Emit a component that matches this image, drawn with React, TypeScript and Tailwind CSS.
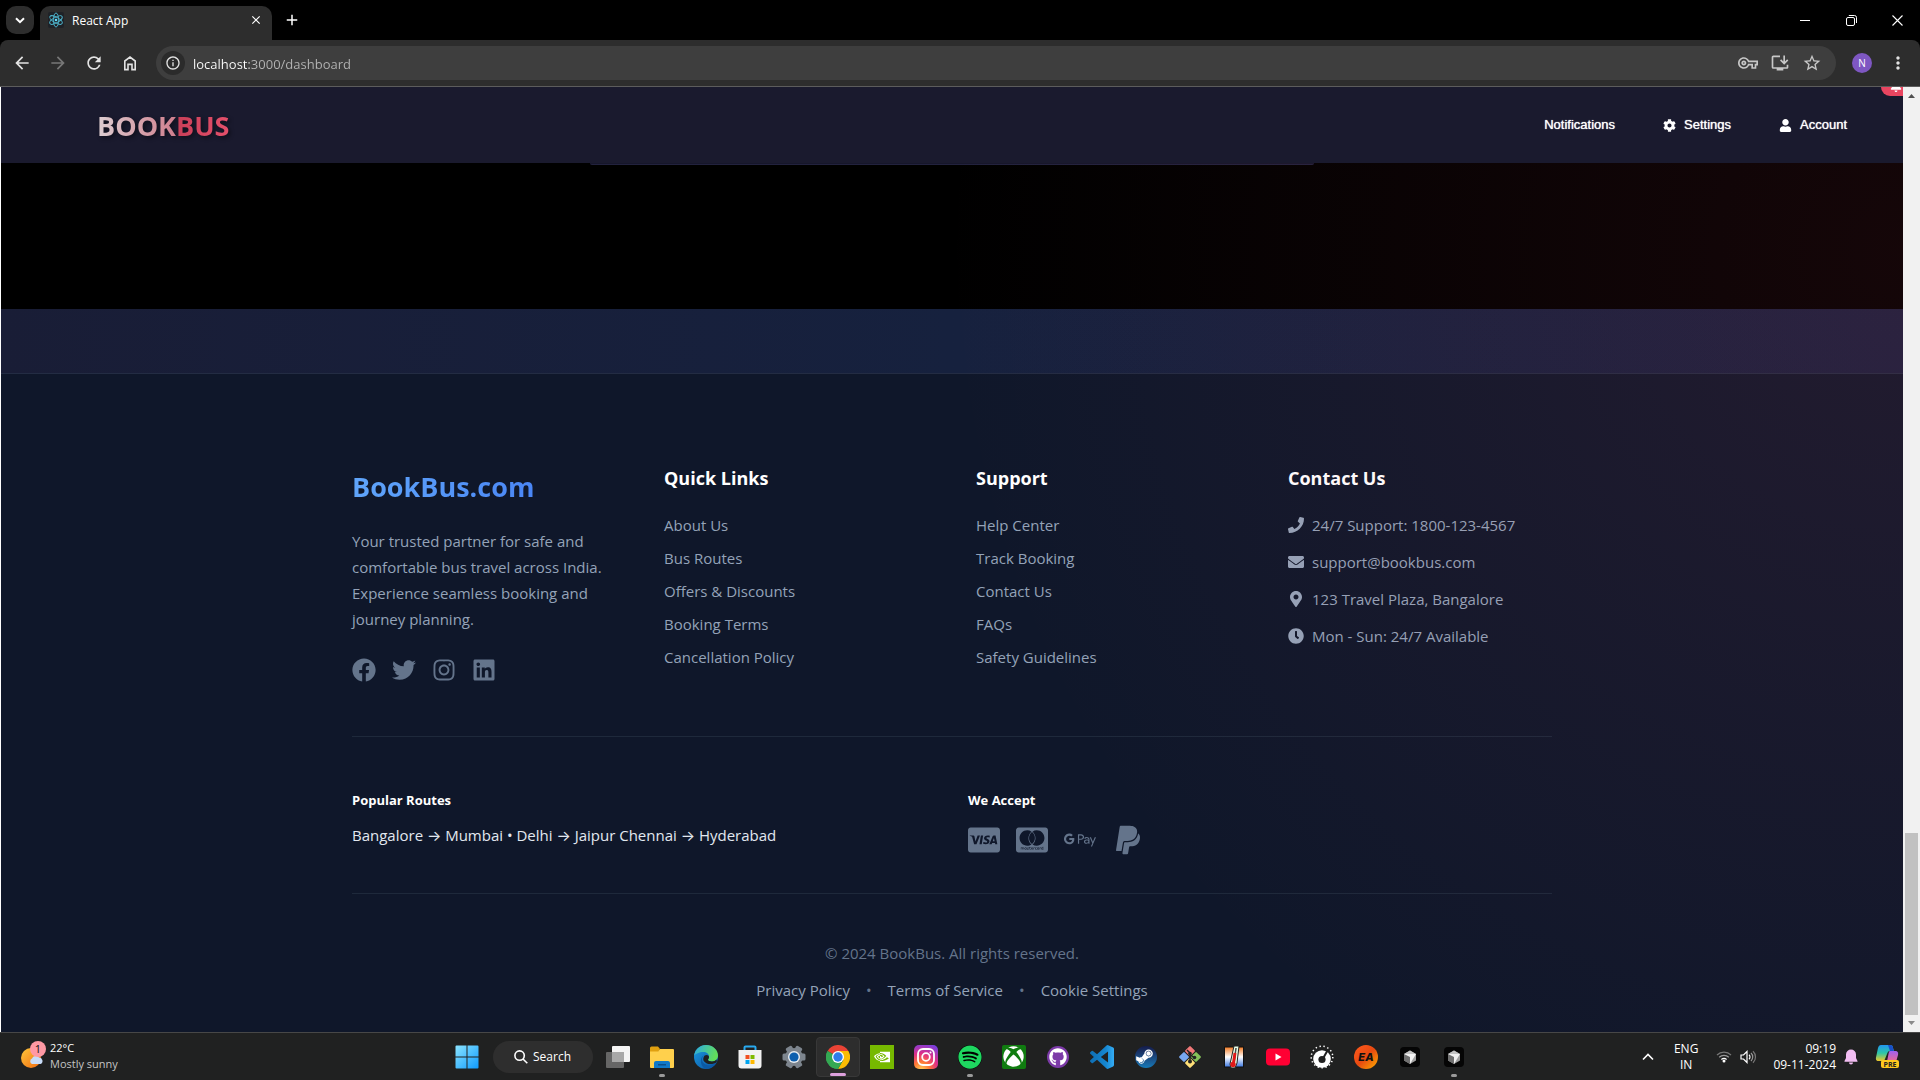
import React from "react";
import { FaFacebook, FaTwitter, FaInstagram, FaLinkedin, FaPhone, FaEnvelope, FaMapMarkerAlt, FaClock, FaCcVisa, FaCcMastercard, FaGooglePay, FaPaypal, FaCog, FaUser, FaBell, FaXbox, FaGithub, FaSpotify, FaSteamSymbol } from "react-icons/fa";
import { SiNvidia } from "react-icons/si";
import { MdOutlineVpnKey, MdInstallDesktop, MdStarBorder, MdRefresh, MdArrowBack, MdArrowForward, MdClose, MdAdd, MdMoreVert, MdInfoOutline } from "react-icons/md";

const UI = "font-['Open_Sans','Inter','Noto_Sans',sans-serif]";

function ReactLogo() {
  return (
    <svg width="16" height="16" viewBox="0 0 16 16" fill="none" stroke="#4fb8d0" strokeWidth="0.9">
      <rect width="16" height="16" rx="2" fill="#1f2227" stroke="none" />
      <ellipse cx="8" cy="8" rx="7" ry="2.7" transform="rotate(30 8 8)" />
      <ellipse cx="8" cy="8" rx="7" ry="2.7" transform="rotate(90 8 8)" />
      <ellipse cx="8" cy="8" rx="7" ry="2.7" transform="rotate(150 8 8)" />
      <circle cx="8" cy="8" r="1.3" fill="#61dafb" stroke="none" />
    </svg>
  );
}

function TabStrip() {
  return (
    <div className="flex h-10 items-stretch bg-black text-white">
      <div className="flex items-center pl-[6px] pr-[6px]">
        <button aria-label="Search tabs" className="flex h-7 w-7 items-center justify-center rounded-[10px] bg-[#2d2d2d]">
          <svg width="10" height="7" viewBox="0 0 10 7" fill="none" stroke="#fff" strokeWidth="2"><path d="M1 1.2 5 5.2 9 1.2" /></svg>
        </button>
      </div>
      <div className="mt-[6px] flex w-[232px] items-center rounded-t-[10px] bg-[#2d2d2d] pb-[6px] pl-2 pr-2">
        <ReactLogo />
        <span className="ml-2 flex-1 pt-px text-[12px]">React App</span>
        <button aria-label="Close tab" className="flex h-4 w-4 items-center justify-center"><MdClose size={14} /></button>
      </div>
      <button aria-label="New tab" className="flex w-[40px] items-center justify-center"><MdAdd size={18} /></button>
      <div className="flex-1" />
      <div className="flex items-center">
        <button aria-label="Minimize" className="flex h-8 w-[46px] items-center justify-center"><span className="h-px w-[10px] bg-white" /></button>
        <button aria-label="Restore" className="flex h-8 w-[46px] items-center justify-center">
          <svg width="11" height="11" viewBox="0 0 11 11" fill="none" stroke="#fff"><rect x="0.5" y="2.5" width="8" height="8" rx="1.5" /><path d="M2.8.5H8.5a2 2 0 0 1 2 2V8" /></svg>
        </button>
        <button aria-label="Close" className="flex h-8 w-[46px] items-center justify-center">
          <svg width="11" height="11" viewBox="0 0 11 11" stroke="#fff" strokeWidth="1.1"><path d="M.5.5l10 10M10.5.5l-10 10" /></svg>
        </button>
      </div>
    </div>
  );
}

function Toolbar() {
  return (
    <div className="bg-black">
      <div className="flex h-[46px] items-center rounded-t-lg bg-[#2d2d2d] text-[#e3e3e3]">
        <div className="flex w-[156px] items-center gap-4 pl-3">
          <button aria-label="Back"><MdArrowBack size={20} /></button>
          <button aria-label="Forward" className="text-[#777]"><MdArrowForward size={20} /></button>
          <button aria-label="Reload"><MdRefresh size={20} /></button>
          <button aria-label="Home">
            <svg width="20" height="20" viewBox="0 0 20 20" fill="none" stroke="currentColor" strokeWidth="1.6"><path d="M4.8 16.6V8L10 4l5.200 4v8.600H12V11.400H8v5.200z" /></svg>
          </button>
        </div>
        <div className="flex h-[34px] flex-1 items-center rounded-full bg-[#3e3e3e] pl-[5px] pr-[14px]">
          <span className="flex h-6 w-6 items-center justify-center rounded-full bg-[#2b2b2b]"><MdInfoOutline size={16} /></span>
          <input aria-label="Address" defaultValue="localhost:3000/dashboard" className="ml-2 h-6 flex-1 bg-[linear-gradient(90deg,#ffffff_56px,#b4b4b4_56px)] bg-clip-text pt-px text-[13px] text-transparent outline-none" />
          <div className="flex items-center gap-3 text-[#c7c7c7]">
            <button aria-label="Passwords"><MdOutlineVpnKey size={20} /></button>
            <button aria-label="Install app"><MdInstallDesktop size={20} /></button>
            <button aria-label="Bookmark"><MdStarBorder size={20} /></button>
          </div>
        </div>
        <button aria-label="Profile" className="ml-4 flex h-5 w-5 items-center justify-center rounded-full bg-[#7e57c2] text-[10px] text-white">N</button>
        <button aria-label="Menu" className="ml-4 mr-3"><MdMoreVert size={20} /></button>
      </div>
      <div className="h-px bg-[#5c5c5c]" />
    </div>
  );
}

function NavBar() {
  return (
    <header className="relative flex h-[76px] items-center overflow-hidden bg-[#1a1a2e] pl-24 pr-14">
      <a href="#home" className="pt-[2px] text-[27px] font-bold leading-9 drop-shadow-[2px_2px_2px_rgba(0,0,0,0.45)]">
        <span className="bg-linear-to-r from-[#dccdd1] to-[#cf7f8e] bg-clip-text text-transparent">BOOK</span><span className="bg-linear-to-r from-[#c93f58] to-[#e5506b] bg-clip-text text-transparent">BUS</span>
      </a>
      <nav className="ml-auto flex items-center gap-12 font-['Liberation_Sans',Arial,sans-serif] text-[13px] text-white [text-shadow:0_0_1px_#fff]">
        <a href="#notifications">Notifications</a>
        <a href="#settings" className="flex items-center gap-2"><FaCog size={13} />Settings</a>
        <a href="#account" className="flex items-center gap-2"><FaUser size={13} />Account</a>
      </nav>
      <span className="absolute right-0 top-0 flex h-[9px] w-[22px] items-end justify-center overflow-hidden rounded-bl-[9px] bg-[#e94560] pb-1 pl-2 text-white"><FaBell size={12} /></span>
    </header>
  );
}

function LinkColumn({ title, links }: { title: string; links: string[] }) {
  return (
    <section>
      <h3 className="text-[18px] font-bold leading-6 text-white">{title}</h3>
      <ul className="mt-[23px] flex flex-col gap-[9px]">
        {links.map((l) => (
          <li key={l} className="leading-6"><a href="#link">{l}</a></li>
        ))}
      </ul>
    </section>
  );
}

const contacts = [
  { icon: FaPhone, text: "24/7 Support: 1800-123-4567" },
  { icon: FaEnvelope, text: "support@bookbus.com" },
  { icon: FaMapMarkerAlt, text: "123 Travel Plaza, Bangalore" },
  { icon: FaClock, text: "Mon - Sun: 24/7 Available" },
];

const socials = [
  { icon: FaFacebook, name: "Facebook" },
  { icon: FaTwitter, name: "Twitter" },
  { icon: FaInstagram, name: "Instagram" },
  { icon: FaLinkedin, name: "LinkedIn" },
];

function Footer() {
  return (
    <footer className="flex-1 border-t border-[#232c43] bg-[#0f172a] px-6 text-[15px] text-[#94a3b8]">
      <div className="mx-auto max-w-[1200px]">
        <div className="grid grid-cols-4 gap-12 pt-[92px]">
          <section>
            <h2 className="w-fit bg-linear-to-r from-[#60a5fa] to-[#4a86f5] bg-clip-text text-[27px] font-bold leading-[42px] text-transparent">BookBus.com</h2>
            <p className="mt-5 whitespace-nowrap leading-[26px]">
              Your trusted partner for safe and<br />comfortable bus travel across India.<br />Experience seamless booking and<br />journey planning.
            </p>
            <div className="mt-[26px] flex gap-4 text-[#64748b]">
              {socials.map(({ icon: Icon, name }) => (
                <a key={name} href="#social" aria-label={name}><Icon size={24} /></a>
              ))}
            </div>
          </section>
          <LinkColumn title="Quick Links" links={["About Us", "Bus Routes", "Offers & Discounts", "Booking Terms", "Cancellation Policy"]} />
          <LinkColumn title="Support" links={["Help Center", "Track Booking", "Contact Us", "FAQs", "Safety Guidelines"]} />
          <section>
            <h3 className="text-[18px] font-bold leading-6 text-white">Contact Us</h3>
            <ul className="mt-[23px] flex flex-col gap-[13px]">
              {contacts.map(({ icon: Icon, text }) => (
                <li key={text} className="flex items-center gap-2 leading-6"><Icon size={16} />{text}</li>
              ))}
            </ul>
          </section>
        </div>
        <div className="mt-[54px] grid grid-cols-2 gap-8 border-y border-[#1e293b] pb-[37px] pt-[51px]">
          <section>
            <h4 className="text-[13px] font-bold leading-6 text-white">Popular Routes</h4>
            <p className="mt-[11px] leading-6 text-[#e2e8f0]">Bangalore → Mumbai • Delhi → Jaipur Chennai → Hyderabad</p>
          </section>
          <section>
            <h4 className="text-[13px] font-bold leading-6 text-white">We Accept</h4>
            <div className="mt-3 flex gap-4 text-[#64748b]">
              <FaCcVisa size={32} /><FaCcMastercard size={32} /><FaGooglePay size={32} /><FaPaypal size={32} />
            </div>
          </section>
        </div>
        <div className="flex flex-col items-center gap-[13px] pt-[47px] leading-6">
          <p className="text-[#64748b]">© 2024 BookBus. All rights reserved.</p>
          <div className="flex gap-4">
            <a href="#privacy">Privacy Policy</a><span className="text-[#64748b]">•</span>
            <a href="#terms">Terms of Service</a><span className="text-[#64748b]">•</span>
            <a href="#cookies">Cookie Settings</a>
          </div>
        </div>
      </div>
    </footer>
  );
}

function ScrollBar() {
  return (
    <div className="flex w-[17px] flex-col items-center bg-[#f1f1f1]">
      <svg width="17" height="17" viewBox="0 0 17 17"><path d="M5 11h7L8.500 7z" fill="#505050" /></svg>
      <div className="flex-1" />
      <div className="h-[182px] w-[13px] bg-[#c1c1c1]" />
      <svg width="17" height="17" viewBox="0 0 17 17"><path d="M5 6h7L8.500 10z" fill="#8b8b8b" /></svg>
    </div>
  );
}

const svg = { width: 24, height: 24, viewBox: "0 0 24 24" };

const WindowsIcon = () => (
  <svg {...svg}>
    <defs><linearGradient id="win" x1="0" y1="0" x2="1" y2="1"><stop stopColor="#8be4ff" /><stop offset="1" stopColor="#0f9bff" /></linearGradient></defs>
    <path fill="url(#win)" d="M.5 1.500a1 1 0 0 1 1-1h10v11H.5zM12.500.5h10a1 1 0 0 1 1 1v10h-11zM.5 12.500h11v11h-10a1 1 0 0 1-1-1zM12.500 12.500h11v10a1 1 0 0 1-1 1h-10z" />
  </svg>
);
const TaskViewIcon = () => (
  <svg {...svg}><rect x="6" y="1" width="18" height="16" rx="1" fill="#f4f4f4" /><rect x="0" y="7" width="18" height="16" rx="1" fill="#666" /><path d="M6 7h12v10H6z" fill="#a8a8a8" /></svg>
);
const ExplorerIcon = () => (
  <svg {...svg}><path d="M0 3a1.500 1.500 0 0 1 1.500-1.500H8l2 2.500-2 3H0z" fill="#e0a010" /><path d="M0 6.500h8L10 4h13a1 1 0 0 1 1 1v17a1 1 0 0 1-1 1H1a1 1 0 0 1-1-1z" fill="#ffd04c" /><path d="M4 23v-5a2 2 0 0 1 2-2h12a2 2 0 0 1 2 2v5z" fill="#0f78c8" /><path d="M8 19h8v1.500H8z" fill="#0a4f8c" /></svg>
);
const EdgeIcon = () => (
  <svg {...svg}>
    <defs>
      <linearGradient id="eg" x1="0" y1="0" x2="1" y2=".3"><stop stopColor="#2aa9e8" /><stop offset="1" stopColor="#62de5a" /></linearGradient>
      <linearGradient id="eb" x1="0" y1="0" x2="1" y2="1"><stop stopColor="#1b9de2" /><stop offset="1" stopColor="#0a4f9e" /></linearGradient>
    </defs>
    <circle cx="12" cy="12" r="12" fill="url(#eb)" />
    <path d="M.2 10.500C1 4.500 6 0 12 0c7 0 12 5 12 10.500 0 3.500-2.600 6-6 6-2.500 0-4-.8-4-1.700 0-.7 1-1 1-3C15 9 12.500 7 9.500 7 5 7 1.500 9 .2 10.500z" fill="url(#eg)" />
    <path d="M9.500 10.500c-2 2-2.200 5 0 7.600 2.500 2.900 7.200 3.600 12 .4-2 3.500-5.700 5.500-9.500 5.500C6.500 22.500 5 13 9.500 10.500z" fill="#0c59a4" />
    <path d="M15 12c0 1.800-1 2-1 2.800 0 1 1.700 1.700 4 1.700 1.800 0 3.500-.7 4.600-2l.2 2.500c-3.800 3-10 2.700-12.600-.5-1.700-2-.7-4.800.5-6 2.300-1.300 4.300 0 4.300 1.500z" fill="#202020" />
  </svg>
);
const StoreIcon = () => (
  <svg {...svg}><path d="M6.500 6V2.500a1 1 0 0 1 1-1h9a1 1 0 0 1 1 1V6" fill="none" stroke="#28aaf0" strokeWidth="2" /><path d="M.5 5h23v15.500a3 3 0 0 1-3 3h-17a3 3 0 0 1-3-3z" fill="#f2f2f2" /><path d="M7.500 10H11.500v4h-4z" fill="#f25022" /><path d="M12.500 10h4v4h-4z" fill="#7fba00" /><path d="M7.500 15h4v4h-4z" fill="#00a4ef" /><path d="M12.500 15h4v4h-4z" fill="#ffb900" /></svg>
);
const SettingsIcon = () => (
  <svg {...svg}><g fill="#7d858e"><circle cx="12" cy="12" r="9" />{[30, 90, 150].map((a) => <rect key={a} x="8.500" y="0.500" width="7" height="23" rx="1.500" transform={`rotate(${a} 12 12)`} />)}</g><circle cx="12" cy="12" r="6" fill="#e8edf2" /><circle cx="12" cy="12" r="4.600" fill="#0c5fae" /></svg>
);
const ChromeIcon = () => (
  <svg {...svg}><path d="M12 12 1.600 6A12 12 0 0 1 22.400 6z" fill="#ea4335" /><path d="M12 12v12A12 12 0 0 1 1.600 6z" fill="#34a853" /><path d="M12 6h10.400A12 12 0 0 1 12 24l5.200-9z" fill="#fbbc04" /><path d="M1.600 6 6.800 15A6 6 0 0 0 12 18l5.200-3L12 24A12 12 0 0 1 1.600 6z" fill="#34a853" /><circle cx="12" cy="12" r="6" fill="#fff" /><circle cx="12" cy="12" r="4.700" fill="#2f7de9" /></svg>
);
const InstagramIcon = () => (
  <svg {...svg}>
    <defs><radialGradient id="ig" cx=".3" cy="1.050" r="1.150"><stop stopColor="#ffd35a" /><stop offset=".3" stopColor="#ff7a35" /><stop offset=".6" stopColor="#e02f86" /><stop offset="1" stopColor="#7a3fe0" /></radialGradient></defs>
    <rect width="24" height="24" rx="5" fill="url(#ig)" /><rect x="4" y="4" width="16" height="16" rx="5" fill="none" stroke="#fff" strokeWidth="1.800" /><circle cx="12" cy="12" r="3.800" fill="none" stroke="#fff" strokeWidth="1.800" /><circle cx="16.500" cy="7.500" r="1" fill="#fff" />
  </svg>
);
const CodeIcon = () => (
  <svg {...svg}>
    <defs><linearGradient id="vs" x1="0" y1="0" x2="1" y2="0"><stop stopColor="#0f6fb4" /><stop offset=".65" stopColor="#1586d0" /><stop offset="1" stopColor="#35adf5" /></linearGradient></defs>
    <path fill="url(#vs)" d="M23.15 2.587L18.21.21a1.494 1.494 0 0 0-1.705.29l-9.46 8.63-4.12-3.128a.999.999 0 0 0-1.276.057L.327 7.261A1 1 0 0 0 .326 8.74L3.899 12 .326 15.26a1 1 0 0 0 .001 1.479L1.65 17.94a.999.999 0 0 0 1.276.057l4.12-3.128 9.46 8.63a1.492 1.492 0 0 0 1.704.29l4.942-2.377A1.5 1.5 0 0 0 24 20.06V3.939a1.5 1.5 0 0 0-.85-1.352zm-5.146 14.861L10.826 12l7.178-5.448v10.896z" />
  </svg>
);
const GitIcon = () => (
  <svg {...svg}><g transform="rotate(45 12 12)"><rect x="4" y="4" width="7.500" height="7.500" rx="1" fill="#f07878" /><rect x="12.500" y="4" width="7.500" height="7.500" rx="1" fill="#84c15a" /><rect x="4" y="12.500" width="7.500" height="7.500" rx="1" fill="#78a8f0" /><rect x="12.500" y="12.500" width="7.500" height="7.500" rx="1" fill="#ffe078" /></g><path d="M9 5l3 3v9M12 9.500l4 3" stroke="#222" strokeWidth="1.500" fill="none" /><g fill="#222"><circle cx="12" cy="8.500" r="1.800" /><circle cx="12" cy="16.500" r="2" /><circle cx="16.500" cy="12.500" r="1.800" /></g></svg>
);
const ThermometerIcon = () => (
  <svg {...svg}><defs><linearGradient id="th" x1="0" y1="0" x2="0" y2="1"><stop stopColor="#f07820" /><stop offset=".5" stopColor="#fff" /><stop offset="1" stopColor="#3c78e0" /></linearGradient></defs><rect x="2.500" y="2" width="19" height="20" fill="url(#th)" stroke="#111" /><path d="M12 1h5l-2 17-2 5H9l-1-4z" fill="#e8ffe8" stroke="#222" /><path d="M14 3l-2 15" stroke="#4a4a4a" strokeWidth="1.500" /><path d="M13 8l-1.500 10" stroke="#e01818" strokeWidth="3" /><circle cx="11" cy="19.500" r="2.700" fill="#e01818" /></svg>
);
const YoutubeIcon = () => (<svg {...svg}><rect x="0" y="3.500" width="24" height="17" rx="4" fill="#ff0033" /><path d="M9.500 8.500v7l6-3.500z" fill="#fff" /></svg>);
const DialIcon = () => (
  <svg {...svg}><circle cx="12" cy="12" r="10.800" fill="none" stroke="#fff" strokeWidth="1.500" strokeDasharray="1.400 2.600" /><circle cx="12" cy="14" r="8.800" fill="#fff" /><circle cx="12" cy="14.500" r="3.600" fill="#202020" /><path d="M13 13.500l4.500-8" stroke="#202020" strokeWidth="2" /></svg>
);
const EaIcon = () => (
  <svg {...svg}><defs><linearGradient id="ea" x1="0" y1="0" x2="1" y2="1"><stop stopColor="#ff5a1e" /><stop offset="0.500" stopColor="#e84a10" /><stop offset="1" stopColor="#ffb000" /></linearGradient></defs><circle cx="12" cy="12" r="12" fill="url(#ea)" /><text x="12" y="16" textAnchor="middle" fontSize="11" fontWeight="800" fontStyle="italic" fontFamily="Inter, sans-serif" fill="#111">EA</text></svg>
);
const CubeIcon = () => (
  <svg {...svg}><rect x="2" y="2" width="20" height="20" rx="4" fill="#050505" /><path d="M12 5.500 18 9v6.500L12 19l-6-3.500V9z" fill="#a0a0a0" /><path d="M6 9h12l-6 10z" fill="#f2f2f2" /><path d="M6 9l6 3v7l-6-3.500z" fill="#707070" /><path d="M6 9l6-3.500L18 9z" fill="#c4c4c4" /></svg>
);

const apps = [
  { name: "Task view", el: <TaskViewIcon /> },
  { name: "File Explorer", el: <ExplorerIcon />, open: true },
  { name: "Edge", el: <EdgeIcon /> },
  { name: "Microsoft Store", el: <StoreIcon /> },
  { name: "Settings", el: <SettingsIcon /> },
  { name: "Chrome", el: <ChromeIcon />, active: true },
  { name: "NVIDIA", el: <span className="flex h-6 w-6 items-center justify-center bg-[#76b900] text-white"><SiNvidia size={16} /></span> },
  { name: "Instagram", el: <InstagramIcon /> },
  { name: "Spotify", el: <span className="rounded-full bg-black text-[#1ed760]"><FaSpotify size={24} /></span>, open: true },
  { name: "Xbox", el: <span className="flex h-6 w-6 items-center justify-center rounded-[2px] bg-[#107c10] text-white"><FaXbox size={21} /></span> },
  { name: "GitHub", el: <span className="flex h-[22px] w-[22px] items-center justify-center rounded-full bg-[#7c3aa8] text-white"><FaGithub size={18} /></span> },
  { name: "Visual Studio Code", el: <CodeIcon /> },
  { name: "Steam", el: <span className="flex h-[22px] w-[22px] items-center justify-start rounded-full bg-linear-to-b from-[#141b4a] to-[#147ab8] text-white"><FaSteamSymbol size={19} /></span> },
  { name: "Git", el: <GitIcon /> },
  { name: "Temperature monitor", el: <ThermometerIcon /> },
  { name: "YouTube", el: <YoutubeIcon /> },
  { name: "Dial", el: <DialIcon /> },
  { name: "EA", el: <EaIcon /> },
  { name: "Editor", el: <CubeIcon /> },
  { name: "Editor window", el: <CubeIcon />, open: true },
];

function Taskbar() {
  return (
    <div className="grid h-12 grid-cols-[1fr_auto_1fr] items-stretch border-t border-[#474747] bg-[#202121] text-white">
      <div className="flex items-center pb-px pl-5">
        <button className="flex items-center gap-1 text-left">
          <svg width="26" height="30" viewBox="0 0 26 30">
            <defs><linearGradient id="sun" x1="0" y1="0" x2="1" y2="1"><stop stopColor="#ffc83c" /><stop offset="1" stopColor="#f06a10" /></linearGradient></defs>
            <circle cx="11" cy="17" r="10" fill="url(#sun)" /><path d="M12 23a3 3 0 0 1 0-5.500 4 4 0 0 1 7-1 3.400 3.400 0 0 1 1.500 6.500z" fill="#c8dcf8" /><circle cx="18" cy="8" r="8" fill="#ff99a4" />
            <text x="18" y="12" textAnchor="middle" fontSize="11" fontFamily="Open Sans, sans-serif" fill="#111">1</text>
          </svg>
          <span className="text-[11px] leading-4"><span className="block">22°C</span><span className="block text-[#c4c4c4]">Mostly sunny</span></span>
        </button>
      </div>
      <div className="flex items-center">
        <button aria-label="Start" className="flex w-11 items-center justify-center"><WindowsIcon /></button>
        <button className="ml-1 mr-[3px] flex h-8 w-[100px] items-center justify-center gap-[5px] rounded-full bg-[#2e2e2e] text-[12px]">
          <svg width="14" height="14" viewBox="0 0 14 14" fill="none" stroke="#fff" strokeWidth="1.600"><circle cx="5.600" cy="5.600" r="4.700" /><path d="M9 9l4.300 4.300" /></svg>
          Search
        </button>
        {apps.map((a) => (
          <button key={a.name} aria-label={a.name} className={a.active ? "relative flex h-10 w-11 items-center justify-center rounded-[4px] border border-[#383838] bg-[#2d2d2d]" : "relative flex h-10 w-11 items-center justify-center"}>
            {a.el}
            {a.open && <span className="absolute bottom-0 h-[3px] w-[6px] rounded-full bg-[#9a9a9a]" />}
            {a.active && <span className="absolute bottom-0 h-[3px] w-4 rounded-full bg-[#dda0dd]" />}
          </button>
        ))}
      </div>
      <div className="flex items-center justify-end pr-5 text-[12px] leading-4">
        <button aria-label="Hidden icons" className="mr-5">
          <svg width="12" height="8" viewBox="0 0 12 8" fill="none" stroke="#fff" strokeWidth="1.600"><path d="M1 6.500 6 1.500l5 5" /></svg>
        </button>
        <button className="mr-[18px] text-center"><span className="block">ENG</span><span className="block">IN</span></button>
        <button aria-label="Network and volume" className="mr-4 flex items-center gap-2">
          <svg width="16" height="13" viewBox="0 0 16 13" fill="none" strokeWidth="1.200"><path d="M1 5a10 10 0 0 1 14 0" stroke="#777" /><path d="M3.200 7.300a7 7 0 0 1 9.600 0" stroke="#999" /><path d="M5.400 9.500a4 4 0 0 1 5.200 0" stroke="#fff" /><circle cx="8" cy="11" r="1.500" fill="#fff" /></svg>
          <svg width="17" height="14" viewBox="0 0 17 14" fill="none" strokeWidth="1.200"><path d="M1 5v4h2.500L7 12.500v-11L3.500 5z" stroke="#fff" /><path d="M9 4.800a3 3 0 0 1 0 4.400" stroke="#fff" /><path d="M11 3a5.500 5.500 0 0 1 0 8" stroke="#999" /><path d="M13 1.200a8 8 0 0 1 0 11.600" stroke="#777" /></svg>
        </button>
        <button className="mr-2 text-right"><span className="block">09:19</span><span className="block">09-11-2024</span></button>
        <button aria-label="Notifications" className="mr-[17px]">
          <svg width="14" height="16" viewBox="0 0 14 16" fill="#f2bdf2"><path d="M7 .5A5 5 0 0 0 2 5.500V9L.5 12v.8h13V12L12 9V5.500a5 5 0 0 0-5-5zM5 13.500h4a2 2 0 0 1-4 0z" /></svg>
        </button>
        <button aria-label="Copilot">
          <svg width="25" height="25" viewBox="0 0 25 25">
            <defs><linearGradient id="c1" x1="0" y1="0" x2="0" y2="1"><stop stopColor="#2296f0" /><stop offset=".5" stopColor="#2cc6a8" /><stop offset="1" stopColor="#f0c828" /></linearGradient><linearGradient id="c2" x1="0" y1="0" x2="0" y2="1"><stop stopColor="#a060f0" /><stop offset="1" stopColor="#f06a8c" /></linearGradient></defs>
            <path d="M6 1h9a3 3 0 0 1 3 3l1 3h-4c-2 0-2.500 1.500-3 3l-2 5c-.5 1.500-1.500 2-3 2H3.500C1 17 .5 15 1.200 12.500L3 4c.5-2 1.500-3 3-3z" fill="url(#c1)" /><path d="M13 1h2a3 3 0 0 1 3 3l1 3h-4z" fill="#1950c8" /><path d="M15 7h5c3 0 3.500 2 3 4l-2 7h-11c2 0 2-1 2.500-3l1-5c.3-1.500.5-3 1.500-3z" fill="url(#c2)" />
            <rect x="6" y="16" width="18" height="8" rx="2" fill="#ffc81e" /><text x="15" y="22.800" textAnchor="middle" fontSize="7" fontWeight="bold" fontFamily="Open Sans, sans-serif" fill="#222">PRE</text>
          </svg>
        </button>
      </div>
    </div>
  );
}

export default function App() {
  return (
    <div className={`flex min-h-screen flex-col bg-black ${UI}`}>
      <TabStrip />
      <Toolbar />
      <div className="flex flex-1 border-l border-white">
        <div className="relative flex flex-1 flex-col bg-black">
          <NavBar />
          <div className="flex h-[146px] justify-center"><div className="h-[2px] w-[724px] rounded-b-[2px] border-b border-[#22223e] bg-[#16162a]" /></div>
          <div className="h-16 bg-linear-to-r from-[#191d36] via-[#16213e] to-[#1a1f3c]" />
          <Footer />
          <div className="pointer-events-none absolute inset-x-0 bottom-0 top-[76px] bg-[radial-gradient(circle_at_100%_10%,rgba(233,69,96,0.09)_0%,transparent_47%)]" />
        </div>
        <ScrollBar />
      </div>
      <Taskbar />
    </div>
  );
}
